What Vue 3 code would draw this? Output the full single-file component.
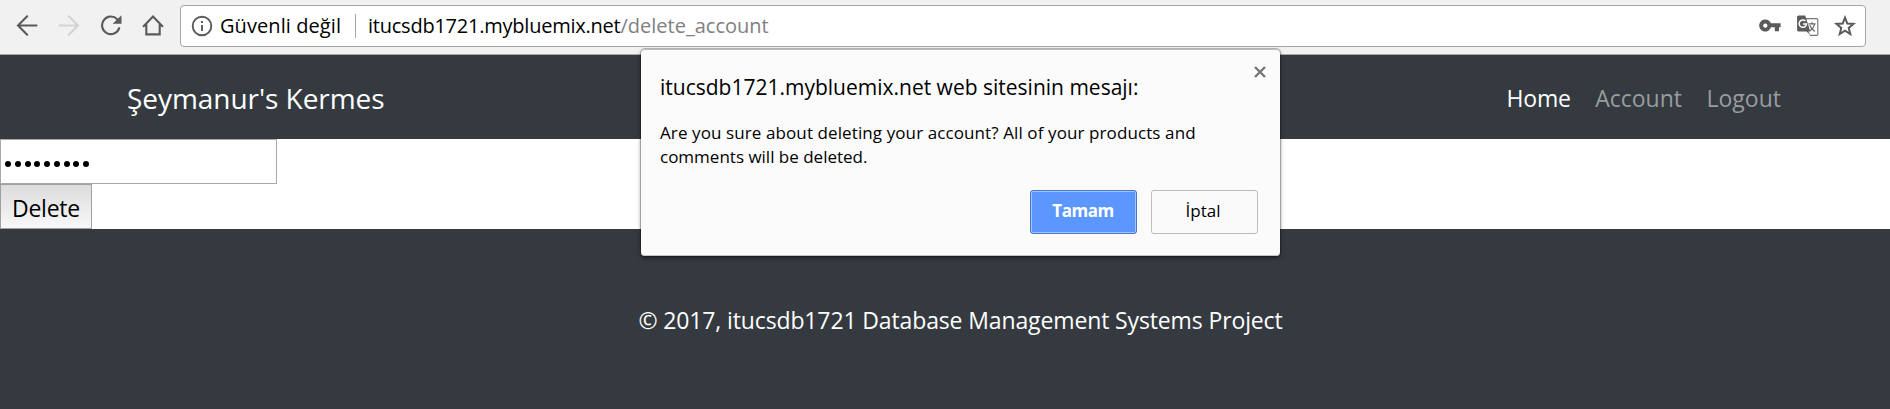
<script setup>
const links = [
  { label: 'Home', active: true },
  { label: 'Account', active: false },
  { label: 'Logout', active: false }
]
const passwordLength = 9
</script>

<template>
  <div class="window">
    <header class="toolbar">
      <div class="controls">
        <svg width="22" height="22" viewBox="0 0 22 22" class="stroke">
          <path d="M20.5 11.5H2.6M11.2 2.3L2 11.5l9.2 9.2" />
        </svg>
        <svg width="22" height="22" viewBox="0 0 22 22" class="stroke faded">
          <path d="M1.5 11.5h17.9M10.8 2.3l9.2 9.2-9.2 9.2" />
        </svg>
        <svg width="22" height="22" viewBox="0 0 22 22" class="stroke">
          <path d="M17.2 5.2A8.8 8.8 0 1 0 19.2 14.2" />
          <path class="solid" d="M21.5 1.2v8.6h-8.8z" />
        </svg>
        <svg width="22" height="22" viewBox="0 0 22 22" class="stroke">
          <path d="M1.6 12.2L11 2.6l9.4 9.6M4.3 10.4v10h13.4v-10" stroke-linejoin="miter" />
        </svg>
      </div>
      <div class="omnibox">
        <svg class="info" width="22" height="22" viewBox="0 0 22 22">
          <circle cx="11" cy="11" r="9.3" />
          <path d="M11 10v6M11 6v2" />
        </svg>
        <span class="security">Güvenli değil</span>
        <span class="divider"></span>
        <span class="domain">itucsdb1721.mybluemix.net</span><span class="path">/delete_account</span>
        <div class="actions">
          <svg width="22" height="22" viewBox="0 0 22 22">
            <path fill="#5a5a5a" fill-rule="evenodd" d="M6.3 4.5a6 6 0 0 1 5.6 3.8H21.6v3.9H20v4h-4.2v-4h-3.9A6 6 0 1 1 6.3 4.5zm0 4a2.1 2.1 0 1 0 .01 0z" />
          </svg>
          <svg width="22" height="22" viewBox="0 0 22 22">
            <path d="M9 3.6h10.6a1.2 1.2 0 0 1 1.2 1.2v14.4a1.2 1.2 0 0 1-1.2 1.2h-6.8" fill="#fff" stroke="#777" stroke-width="1.1" />
            <path fill="#5a5a5a" d="M1.6.4h6.6l1 3 4.1 13.2h-2.1l2.7 4.2-4.4-4.2H1.6a1.5 1.5 0 0 1-1.5-1.5V1.9A1.5 1.5 0 0 1 1.6.4z" />
            <path d="M8.5 6.1A3.7 3.7 0 1 0 9.5 9H6" fill="none" stroke="#fff" stroke-width="1.5" />
            <path d="M11.4 8.9h7.2M15 7.2v1.7M17.5 9c-.5 3-2.4 5.5-5 7M12.8 10.2c1 2.5 2.8 4.8 5 6.2" fill="none" stroke="#666" stroke-width="1.2" />
          </svg>
          <svg width="22" height="22" viewBox="0 0 22 22">
            <path d="M11 2.6l2.3 5.9 6.2.4-4.8 4 1.6 6.2L11 15.7l-5.3 3.4 1.6-6.2-4.8-4 6.2-.4z" fill="none" stroke="#5a5a5a" stroke-width="2" />
          </svg>
        </div>
      </div>
    </header>

    <nav class="navbar">
      <a class="brand">Şeymanur's Kermes</a>
      <ul class="links">
        <li v-for="link in links" :key="link.label" :class="{ active: link.active }">{{ link.label }}</li>
      </ul>
    </nav>

    <main class="content">
      <div class="password"><i v-for="n in passwordLength" :key="n"></i></div>
      <button class="delete">Delete</button>
    </main>

    <footer class="footer">© 2017, itucsdb1721 Database Management Systems Project</footer>

    <section class="dialog" role="dialog">
      <svg class="close" width="12" height="12" viewBox="0 0 12 12">
        <path d="M1 1l10 10M11 1L1 11" />
      </svg>
      <h1>itucsdb1721.mybluemix.net web sitesinin mesajı:</h1>
      <p><span class="first">Are you sure about deleting your account? All of your products and</span><br />comments will be deleted.</p>
      <div class="buttons">
        <button class="ok">Tamam</button>
        <button class="cancel">İptal</button>
      </div>
    </section>
  </div>
</template>

<style>
body {
  margin: 0;
}
</style>

<style scoped>
* {
  box-sizing: border-box;
}
.window {
  position: relative;
  display: flex;
  flex-direction: column;
  width: 1890px;
  height: 409px;
  overflow: hidden;
  font-family: "Open Sans", "Noto Sans", sans-serif;
  white-space: nowrap;
}
svg {
  display: block;
  flex: none;
}
.toolbar {
  display: flex;
  height: 55px;
  padding-top: 5px;
  background: #f1f1f1;
  border-bottom: 1px solid #a8a8a9;
}
.controls {
  display: flex;
  gap: 20px;
  width: 180px;
  padding: 9px 0 0 16px;
}
.stroke {
  fill: none;
  stroke: #5a5a5a;
  stroke-width: 2.1;
  stroke-linecap: round;
}
.faded {
  stroke: #d3d3d3;
}
.solid {
  fill: #5a5a5a;
  stroke: none;
}
.omnibox {
  display: flex;
  align-items: center;
  width: 1686px;
  height: 42px;
  padding: 0 9px 0 10px;
  background: #fff;
  border: 1px solid #a6a6a6;
  border-radius: 4px;
  font-size: 20px;
  line-height: 28px;
  color: #000;
}
.info {
  fill: none;
  stroke: #5a5a5a;
  stroke-width: 1.9;
}
.security {
  width: 135px;
  margin-left: 7px;
  letter-spacing: 0.08px;
}
.divider {
  width: 1px;
  height: 24px;
  margin-right: 12px;
  background: #a8a8a8;
}
.domain {
  letter-spacing: -0.23px;
}
.path {
  color: #808080;
}
.actions {
  display: flex;
  gap: 15.5px;
  margin-left: auto;
}
.navbar {
  display: flex;
  align-items: center;
  justify-content: space-between;
  height: 84px;
  padding: 2px 109px 0 127px;
  background: #343a40;
  color: #fff;
}
.brand {
  font-size: 28px;
  letter-spacing: -0.05px;
}
.links {
  display: flex;
  gap: 24.5px;
  margin: 0;
  padding: 0;
  list-style: none;
  font-size: 23px;
  color: #999c9f;
}
.links .active {
  color: #fff;
  letter-spacing: -0.2px;
}
.content {
  height: 90px;
  background: #fff;
}
.password {
  display: flex;
  align-items: center;
  gap: 3.75px;
  width: 277px;
  height: 45px;
  padding: 4px 0 0 4px;
  border: 1px solid #a9a9a9;
}
.password i {
  width: 6px;
  height: 6px;
  border-radius: 50%;
  background: #000;
}
button {
  display: block;
  margin: 0;
  font-family: inherit;
  color: #000;
}
.delete {
  width: 92px;
  height: 45px;
  padding: 3px 0 0;
  border: 1px solid #a0a0a0;
  background: linear-gradient(#dcdcdc, #f8f8f8);
  font-size: 23px;
  line-height: 36px;
  letter-spacing: -0.24px;
}
.footer {
  display: flex;
  align-items: center;
  justify-content: center;
  height: 180px;
  padding: 2px 0 0 31px;
  background: #343a40;
  color: #fff;
  font-size: 23px;
  letter-spacing: -0.13px;
}
.dialog {
  position: absolute;
  left: 641px;
  top: 49px;
  width: 639px;
  height: 207px;
  padding: 22px 22px 0 19px;
  background: #fbfbfb;
  border-radius: 4px;
  box-shadow: 0 0 0 1px rgba(0, 0, 0, 0.22), 0 2px 4px rgba(0, 0, 0, 0.45), inset 0 1px #bcbcbc, inset 0 -1px #c4c4c4;
  color: #000;
}
.close {
  position: absolute;
  right: 14px;
  top: 17px;
  fill: none;
  stroke: #777;
  stroke-width: 2.4;
}
h1 {
  margin: 0;
  font-size: 21px;
  font-weight: 400;
  line-height: 32px;
}
p {
  margin: 18px 0 0;
  font-size: 17px;
  line-height: 24px;
}
.first {
  letter-spacing: 0.1px;
}
.buttons {
  display: flex;
  justify-content: flex-end;
  gap: 14px;
  margin-top: 21px;
}
.buttons button {
  width: 107px;
  height: 44px;
  padding: 0 1px 3px 0;
  border: 1px solid #bdbdbd;
  border-radius: 3px;
  font-size: 17px;
}
.buttons .ok {
  border-color: #4678c8;
  background: #5c97ff;
  box-shadow: inset 0 0 0 1px #a4c5ff;
  color: #fff;
  font-weight: 700;
  letter-spacing: -0.5px;
}
.buttons .cancel {
  padding-right: 3px;
  background: #fafafa;
}
</style>
